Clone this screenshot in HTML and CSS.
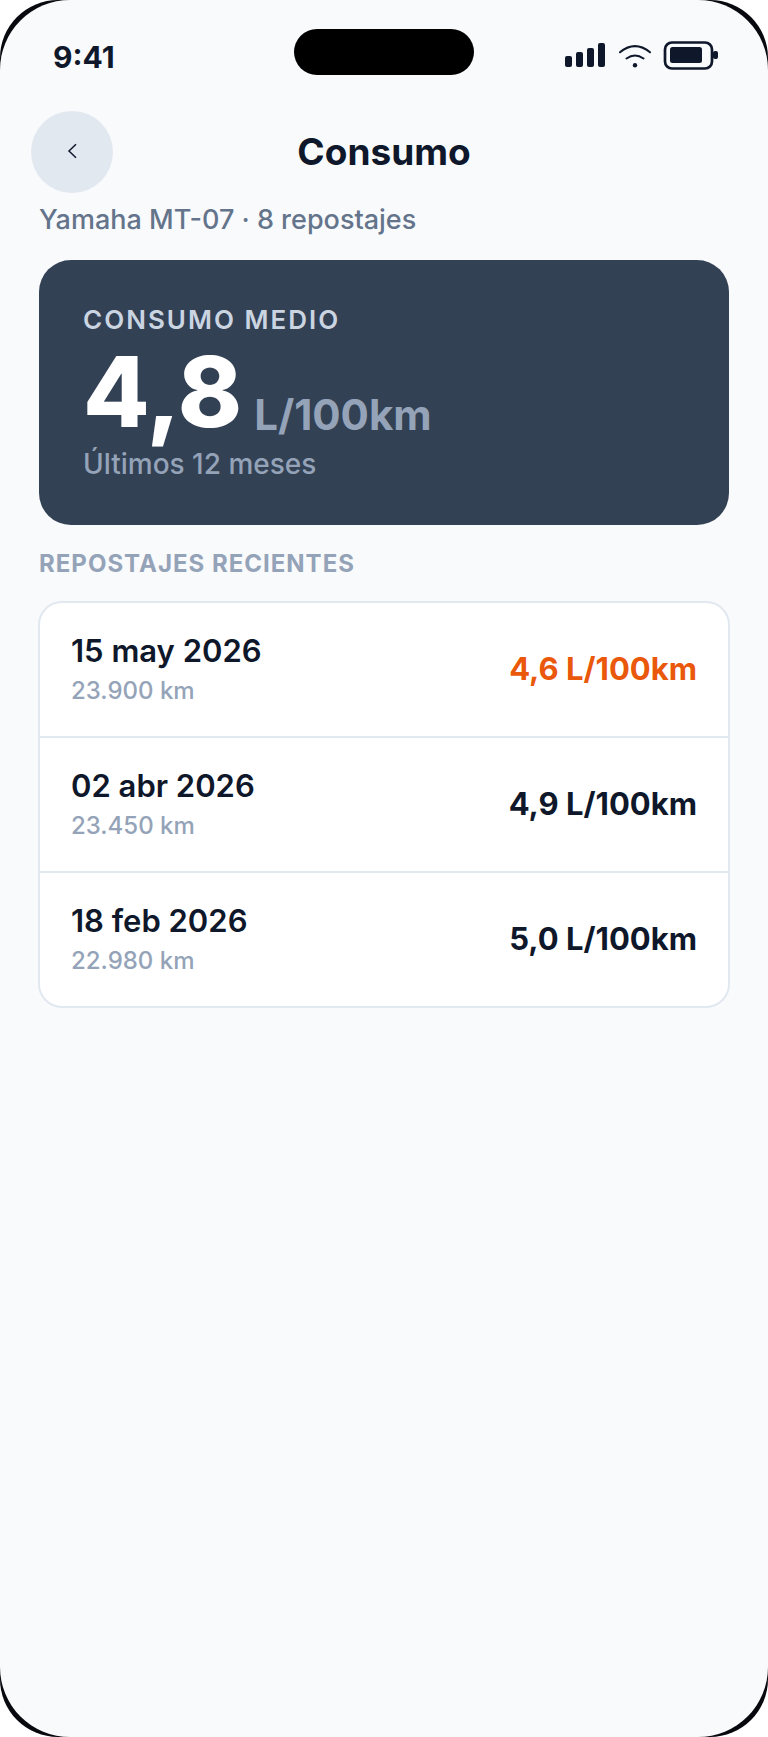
FILE: index.html
```html
<!DOCTYPE html>
<html lang="es">
<head>
<meta charset="utf-8">
<meta name="viewport" content="width=device-width, initial-scale=1">
<title>Consumo</title>
<link rel="stylesheet" href="styles.css">
</head>
<body>
<div class="phone">
  <div class="screen">
    <div class="status">
      <time class="clock">9:41</time>
      <div class="island"></div>
      <svg class="status-icons" viewBox="0 0 154 30" aria-hidden="true">
        <g fill="#0f172a">
          <rect x="0" y="15" width="7" height="11" rx="2"/>
          <rect x="11" y="11" width="7" height="15" rx="2"/>
          <rect x="22" y="7" width="7" height="19" rx="2"/>
          <rect x="33" y="2" width="7" height="24" rx="2"/>
          <circle cx="70" cy="24.300" r="2.200"/>
          <rect x="105" y="6" width="32" height="16" rx="2.500"/>
          <rect x="148" y="10" width="5" height="8" rx="2"/>
        </g>
        <g fill="none" stroke="#0f172a" stroke-linecap="round">
          <path d="M55 11.300Q70 -1 85 11.300M61.500 17.500Q70 11.500 78.500 17.500" stroke-width="2"/>
          <rect x="100" y="1.500" width="47" height="26" rx="7" stroke-width="2.700"/>
        </g>
      </svg>
    </div>
    <header class="topbar">
      <button class="back" type="button" aria-label="Atrás">
        <svg class="chevron" viewBox="0 0 12 18" aria-hidden="true"><path d="M10 1.200L3 8L10 14.800"/></svg>
      </button>
      <h1 class="title">Consumo</h1>
    </header>
    <main class="content">
      <p class="subtitle">Yamaha MT-07 · 8 repostajes</p>
      <section class="summary">
        <h2 class="summary-label">CONSUMO MEDIO</h2>
        <p class="reading"><span class="number">4,8</span><span class="unit">L/100km</span></p>
        <p class="period">Últimos 12 meses</p>
      </section>
      <h2 class="section-title">REPOSTAJES RECIENTES</h2>
      <ul class="list">
        <li class="row"><div><p class="date">15 may 2026</p><p class="distance">23.900 km</p></div><span class="value best">4,6 L/100km</span></li>
        <li class="row"><div><p class="date">02 abr 2026</p><p class="distance">23.450 km</p></div><span class="value">4,9 L/100km</span></li>
        <li class="row"><div><p class="date">18 feb 2026</p><p class="distance">22.980 km</p></div><span class="value">5,0 L/100km</span></li>
      </ul>
    </main>
  </div>
</div>
</body>
</html>
```
FILE: styles.css
```css
* { box-sizing: border-box; }
body, h1, h2, p, ul { margin: 0; padding: 0; }
body {
  background: #fff;
  color: #0f172a;
  font-family: Inter, "Liberation Sans", sans-serif;
}
.phone {
  background: #08080f;
  border-radius: 58px;
}
.screen {
  min-height: 100vh;
  background: #f9fafc;
  border-radius: 70px;
}
.status {
  display: grid;
  grid-template-columns: 1fr 180px 1fr;
  align-items: center;
  height: 111px;
  padding: 0 49px;
}
.clock {
  padding: 2px 0 0 4px;
  font-size: 30px;
  font-weight: 700;
  line-height: 36px;
}
.island {
  height: 46px;
  margin-bottom: 7px;
  border-radius: 23px;
  background: #000;
}
.status-icons {
  justify-self: end;
  width: 154px;
  height: 30px;
}
.topbar {
  display: grid;
  grid-template-columns: 82px 1fr 82px;
  align-items: center;
  padding: 0 31px;
}
.back {
  display: flex;
  align-items: center;
  justify-content: center;
  height: 82px;
  padding: 0;
  border: 0;
  border-radius: 50%;
  background: #e2e8f0;
}
.chevron {
  width: 12px;
  height: 18px;
  fill: none;
  stroke: #0f172a;
  stroke-width: 1.5;
}
.title {
  font-size: 37px;
  font-weight: 700;
  line-height: 44px;
  text-align: center;
}
.content { padding: 10px 39px 40px; }
.subtitle {
  color: #64748b;
  font-size: 27px;
  font-weight: 500;
  line-height: 33px;
}
.summary {
  margin-top: 24px;
  padding: 44px;
  border-radius: 32px;
  background: #334155;
}
.summary-label {
  color: #cbd5e1;
  font-size: 26px;
  font-weight: 600;
  line-height: 32px;
  letter-spacing: 2px;
}
.reading {
  display: flex;
  align-items: flex-end;
  gap: 12px;
  height: 97px;
  margin-top: 7px;
}
.number {
  color: #fff;
  font-size: 97px;
  font-weight: 800;
  line-height: 97px;
}
.unit {
  color: #94a3b8;
  font-size: 42px;
  font-weight: 700;
  line-height: 50px;
}
.period {
  margin-top: 8px;
  color: #94a3b8;
  font-size: 28px;
  font-weight: 500;
  line-height: 33px;
}
.section-title {
  margin-top: 24px;
  color: #94a3b8;
  font-size: 24px;
  font-weight: 700;
  line-height: 30px;
  letter-spacing: 1px;
}
.list {
  margin: 22px -1px 0;
  border: 2px solid #e2e8f0;
  border-radius: 24px;
  background: #fff;
  list-style: none;
}
.row {
  display: flex;
  align-items: center;
  justify-content: space-between;
  padding: 28px 31px 30px;
}
.row + .row { border-top: 2px solid #e2e8f0; }
.date {
  font-size: 31px;
  font-weight: 600;
  line-height: 40px;
}
.distance {
  margin-top: 5px;
  color: #94a3b8;
  font-size: 24px;
  font-weight: 500;
  line-height: 30px;
}
.value {
  font-size: 31px;
  font-weight: 700;
  line-height: 38px;
}
.best { color: #ea580c; }
```
